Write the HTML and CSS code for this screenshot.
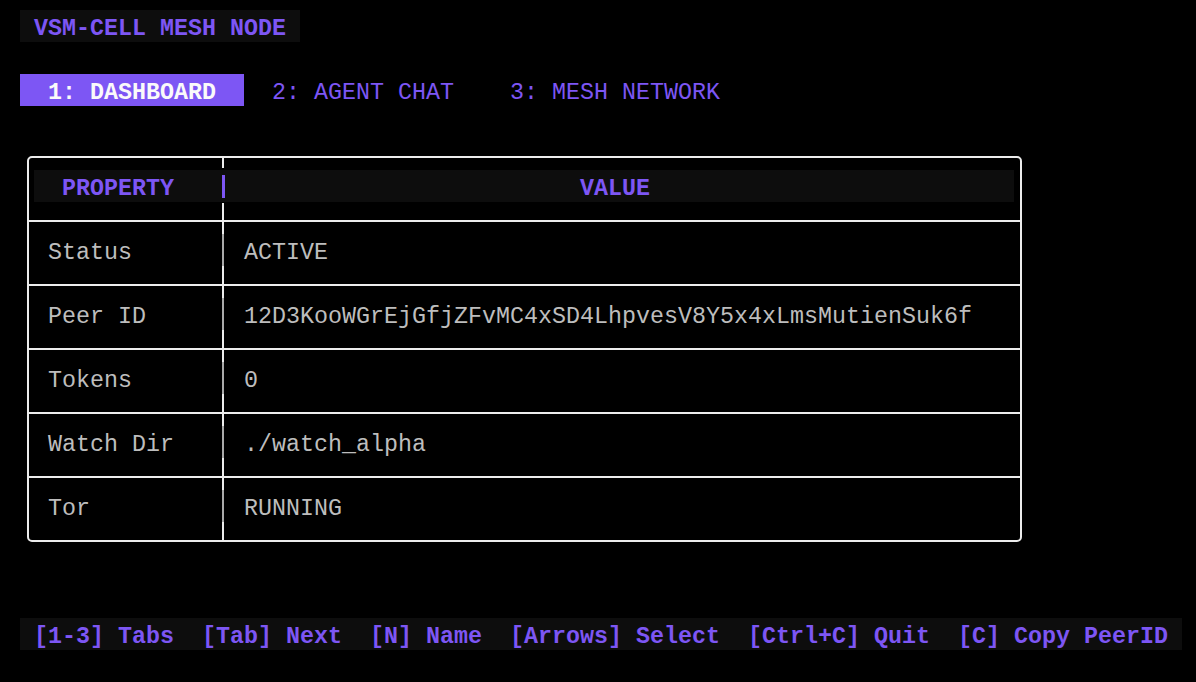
FILE: index.html
```html
<!DOCTYPE html>
<html>
<head>
<meta charset="utf-8">
<link rel="stylesheet" href="styles.css">
</head>
<body>
<div class="screen">
  <div class="title cell">VSM-CELL MESH NODE</div>
  <div class="tabs">
    <div class="tab cell active">1: DASHBOARD</div>
    <div class="tab cell">2: AGENT CHAT</div>
    <div class="tab cell">3: MESH NETWORK</div>
  </div>
  <div class="table">
    <div class="thead">
      <div class="band">
        <div class="th cell th-prop">PROPERTY</div>
        <div class="th-bar"></div>
        <div class="th cell th-val">VALUE</div>
      </div>
    </div>
    <div class="row"><div class="key cell">Status</div><div class="val cell">ACTIVE</div></div>
    <div class="row"><div class="key cell">Peer ID</div><div class="val cell">12D3KooWGrEjGfjZFvMC4xSD4LhpvesV8Y5x4xLmsMutienSuk6f</div></div>
    <div class="row"><div class="key cell">Tokens</div><div class="val cell">0</div></div>
    <div class="row"><div class="key cell">Watch Dir</div><div class="val cell">./watch_alpha</div></div>
    <div class="row"><div class="key cell">Tor</div><div class="val cell">RUNNING</div></div>
  </div>
  <div class="footer cell">[1-3] Tabs  [Tab] Next  [N] Name  [Arrows] Select  [Ctrl+C] Quit  [C] Copy PeerID</div>
</div>
</body>
</html>
```

FILE: styles.css
```css
html, body {
  margin: 0;
  padding: 0;
  background: #000;
}
body {
  width: 1196px;
  height: 682px;
  overflow: hidden;
}
.screen {
  display: flex;
  flex-direction: column;
  align-items: flex-start;
  padding: 10px 20px;
  font-family: "Liberation Mono", "DejaVu Sans Mono", monospace;
  font-size: 23.33px;
  line-height: 32px;
  color: #bdbdbd;
}
.cell {
  white-space: pre;
  box-sizing: border-box;
  height: 32px;
  padding-top: 6px;
  line-height: 26px;
}
.title {
  background: #0d0d0d;
  color: #7d56f4;
  font-weight: bold;
  padding-left: 14px;
  padding-right: 14px;
}
.tabs {
  display: flex;
  margin-top: 32px;
  height: 32px;
}
.tab {
  padding-left: 28px;
  padding-right: 28px;
  color: #7d56f4;
}
.tab.active {
  background: #7d56f4;
  color: #fafafa;
  font-weight: bold;
}
.table {
  margin-top: 50px;
  margin-left: 7px;
  width: 991px;
  border: 2px solid #ececec;
  border-radius: 5px;
}
.thead {
  height: 62px;
  box-sizing: border-box;
  padding: 12px 6px 18px 5px;
  background:
    linear-gradient(#ececec, #ececec) 193px 0 / 2px 10px no-repeat,
    linear-gradient(#ececec, #ececec) 193px 45px / 2px 17px no-repeat;
}
.band {
  display: grid;
  grid-template-columns: 188px 3px 1fr;
  align-items: center;
  height: 32px;
  background: #0d0d0d;
}
.th {
  color: #7d56f4;
  font-weight: bold;
}
.th-prop {
  padding-left: 28px;
}
.th-bar {
  width: 3px;
  height: 23px;
  margin-top: 1px;
  background: #7d56f4;
}
.th-val {
  padding-left: 355px;
}
.row {
  display: grid;
  grid-template-columns: 195px 1fr;
  height: 62px;
  border-top: 2px solid #ececec;
  background: linear-gradient(to bottom, #ececec 0 12px, #a9a9a9 12px 44px, #ececec 44px) 193px 0 / 2px 100% no-repeat;
}
.key, .val {
  margin-top: 12px;
}
.key {
  padding-left: 19px;
}
.val {
  padding-left: 20px;
}
.footer {
  margin-top: 76px;
  padding-left: 14px;
  padding-right: 14px;
  background: #0d0d0d;
  color: #7d56f4;
  font-weight: bold;
}
```
